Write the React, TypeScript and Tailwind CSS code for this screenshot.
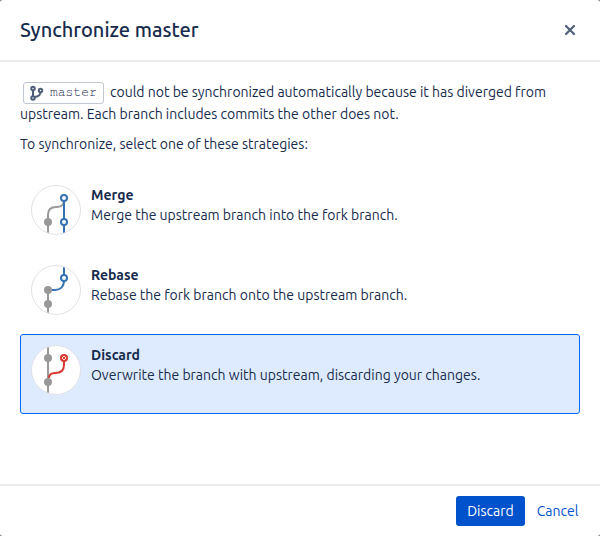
import { useState } from "react";
import type { ReactNode } from "react";

function Frame({ children }: { children: ReactNode }) {
  return (
    <span className="block size-[50px] shrink-0 overflow-hidden rounded-full border border-[#dfe1e6] bg-white">
      <svg viewBox="0 0 48 48" className="block size-12" fill="none" strokeWidth="2" aria-hidden="true">
        {children}
      </svg>
    </span>
  );
}

function MergeIcon() {
  return (
    <Frame>
      <path d="M16 48V29c0-6 3-8 8-8 5 0 8-2 8-6" stroke="#999" />
      <path d="M32 12v36" stroke="#3572b0" />
      <circle cx="16" cy="36" r="4" fill="#999" />
      <circle cx="32" cy="12" r="3" fill="#fff" stroke="#3572b0" />
      <circle cx="32" cy="36" r="3" fill="#fff" stroke="#3572b0" />
    </Frame>
  );
}

function RebaseIcon() {
  return (
    <Frame>
      <path d="M16 24v24" stroke="#999" />
      <path d="M32 0v14c0 7-4 10-9 10h-5" stroke="#3572b0" />
      <circle cx="16" cy="24" r="4" fill="#999" />
      <circle cx="16" cy="38" r="4" fill="#999" />
      <circle cx="32" cy="12" r="3" fill="#fff" stroke="#3572b0" />
    </Frame>
  );
}

function DiscardIcon() {
  return (
    <Frame>
      <path d="M16 0v48" stroke="#999" />
      <circle cx="16" cy="12" r="4" fill="#999" />
      <path d="M17 32c0-3 2-5 6-5 6 0 9-3 9-8v-4" stroke="#d63a30" />
      <circle cx="16" cy="36" r="4" fill="#999" />
      <circle cx="32" cy="12" r="3" fill="#fff" stroke="#d63a30" />
      <path d="m30 10 4 4m0-4-4 4" stroke="#d63a30" strokeWidth="1" />
    </Frame>
  );
}

const strategies = [
  { id: "merge", title: "Merge", text: "Merge the upstream branch into the fork branch.", icon: <MergeIcon /> },
  { id: "rebase", title: "Rebase", text: "Rebase the fork branch onto the upstream branch.", icon: <RebaseIcon /> },
  { id: "discard", title: "Discard", text: "Overwrite the branch with upstream, discarding your changes.", icon: <DiscardIcon /> },
];

export default function App() {
  const [selected, setSelected] = useState("discard");
  const action = strategies.find((s) => s.id === selected)?.title;

  return (
    <div className="min-h-screen bg-[#7a8494]">
      <section
        role="dialog"
        aria-labelledby="dialog-title"
        className="flex min-h-screen flex-col rounded-[3px] bg-white font-['Ubuntu','Noto_Sans',sans-serif] text-sm leading-5 text-[#172b4d]"
      >
        <header className="flex items-center justify-between border-b-2 border-[#ebecf0] px-5 py-4">
          <h1 id="dialog-title" className="text-xl leading-7 font-medium">
            Synchronize master
          </h1>
          <button type="button" aria-label="Close" className="flex h-5 w-5 items-center justify-center">
            <svg viewBox="0 0 12 12" className="size-3" fill="none" stroke="#505f79" strokeWidth="2.2" strokeLinecap="round">
              <path d="m2 2 8 8m0-8-8 8" />
            </svg>
          </button>
        </header>

        <main className="grow p-5">
          <p>
            <span className="mx-[3px] inline-flex h-[22px] items-center gap-[5px] rounded-[3px] border border-[#c1c7d0] pr-1.5 pl-[5px] align-middle font-['Nimbus_Mono_PS','Nimbus_Mono_L','Courier_10_Pitch','FreeMono','Liberation_Mono',monospace] text-[13px] leading-4 text-[#172b4d]">
              <svg viewBox="0 0 16 16" className="size-4" fill="none" stroke="#505f79" strokeWidth="2" aria-hidden="true">
                <circle cx="4" cy="3.5" r="1.75" />
                <circle cx="4" cy="13" r="1.75" />
                <circle cx="11.5" cy="5.5" r="1.75" />
                <path d="M4 5v6M11.500 7c0 3-2 4.500-5.500 5" />
              </svg>
              <span>master</span>
            </span>{" "}
            could not be synchronized automatically because it has diverged from upstream. Each branch includes commits
            the other does not.
          </p>
          <p className="mt-2.5">To synchronize, select one of these strategies:</p>

          <div role="radiogroup" aria-label="Strategy" className="mt-5">
            {strategies.map((s) => (
              <label
                key={s.id}
                className="flex h-20 cursor-pointer gap-2.5 rounded-[3px] border border-transparent p-2.5 has-checked:border-[#0065ff] has-checked:bg-[#deebff]"
              >
                <input
                  type="radio"
                  name="strategy"
                  className="sr-only"
                  checked={selected === s.id}
                  onChange={() => setSelected(s.id)}
                />
                {s.icon}
                <span>
                  <strong className="block font-bold">{s.title}</strong>
                  <span className="block">{s.text}</span>
                </span>
              </label>
            ))}
          </div>
        </main>

        <footer className="flex justify-end border-t-2 border-[#ebecf0] px-2.5 py-2.5">
          <button type="button" className="h-[30px] min-w-[69px] rounded-[3px] bg-[#0052cc] px-2.5 text-white">
            {action}
          </button>
          <button type="button" className="h-[30px] min-w-[65px] px-2.5 text-[#0052cc]">
            Cancel
          </button>
        </footer>
      </section>
    </div>
  );
}
